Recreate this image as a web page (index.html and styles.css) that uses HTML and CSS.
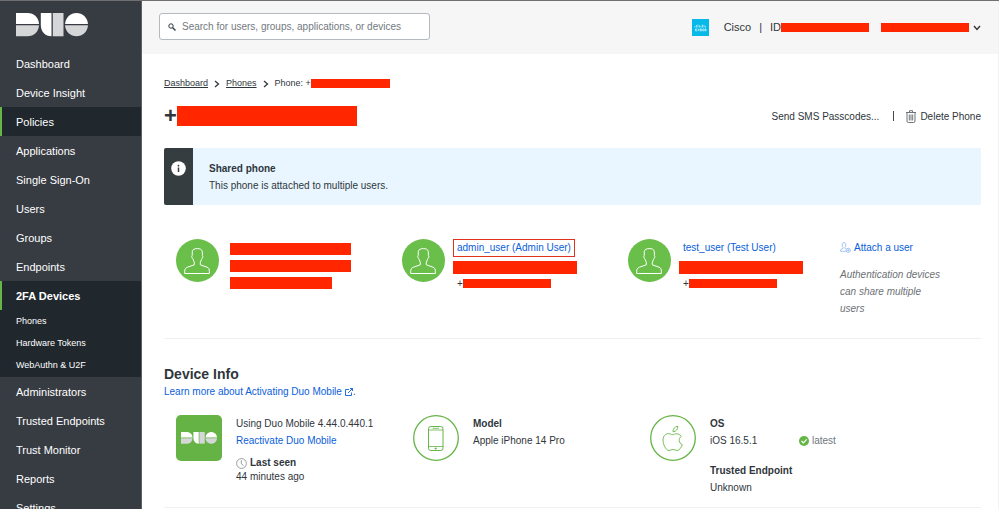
FILE: index.html
```html
<!DOCTYPE html>
<html lang="en">
<head>
<meta charset="utf-8">
<title>Duo Admin - Phone</title>
<link rel="stylesheet" href="styles.css">
</head>
<body>
<svg width="0" height="0" class="defs" aria-hidden="true">
  <symbol id="duo" viewBox="0 0 72 24">
    <path fill="#fff" d="M0 0H11.500C18 0 22.700 4.500 23 11H0Z"/>
    <path class="duo-shade" d="M0 12.300H23C22.500 19 18 23.300 11.500 23.300H0Z"/>
    <path fill="#fff" d="M24.800 0H35.500V23.300C29 23.300 24.800 18.500 24.800 12Z"/>
    <path class="duo-shade" d="M36.800 0H47.500V23.300H36.800Z"/>
    <path fill="#fff" d="M49 11C49.500 4.500 54.500 0 60.500 0S71.500 4.500 72 11Z"/>
    <path class="duo-shade" d="M49 12.300H72C71.500 19 66.500 23.300 60.500 23.300S49.500 19 49 12.300Z"/>
  </symbol>
  <symbol id="person" viewBox="0 0 43 43">
    <path fill="none" stroke="#fff" stroke-width="1" stroke-linejoin="round" d="M8.700 34.500V32.500C8.700 30 9.500 29 11.500 28.200L18.300 25.800V23.300L17.200 20.700L16.600 19.500C15.600 18.500 15.600 17.500 16.200 16.500L16.300 12.500C16.800 10.300 18.500 9.600 21.300 9.600S25.800 10.300 26.300 12.500L26.400 16.500C27 17.500 27 18.500 26 19.500L25.400 20.700L24.300 23.300V25.800L31 28.200C33 29 33.300 30 33.300 32.500V34.500Z"/>
  </symbol>
</svg>
<div class="app">
  <aside class="sidebar">
    <a class="brand" href="#" aria-label="Duo"><svg class="logo"><use href="#duo"/></svg></a>
    <nav>
      <a class="item" href="#">Dashboard</a>
      <a class="item" href="#">Device Insight</a>
      <a class="item active" href="#">Policies</a>
      <a class="item" href="#">Applications</a>
      <a class="item" href="#">Single Sign-On</a>
      <a class="item" href="#">Users</a>
      <a class="item" href="#">Groups</a>
      <a class="item" href="#">Endpoints</a>
      <div class="group">
        <a class="item active current" href="#">2FA Devices</a>
        <a class="sub" href="#">Phones</a>
        <a class="sub" href="#">Hardware Tokens</a>
        <a class="sub" href="#">WebAuthn &amp; U2F</a>
      </div>
      <a class="item" href="#">Administrators</a>
      <a class="item" href="#">Trusted Endpoints</a>
      <a class="item" href="#">Trust Monitor</a>
      <a class="item" href="#">Reports</a>
      <a class="item" href="#">Settings</a>
    </nav>
  </aside>
  <div class="page">
    <header class="topbar">
      <label class="search">
        <svg width="8" height="8" viewBox="0 0 8 8"><circle cx="3" cy="3" r="2.200" fill="none" stroke="#32373c" stroke-width="1"/><path d="M4.700 4.700L7.500 7.500" stroke="#32373c" stroke-width="1.300"/></svg>
        <input type="text" aria-label="Search" placeholder="Search for users, groups, applications, or devices">
      </label>
      <div class="account">
        <svg class="cisco" width="17" height="17" viewBox="0 0 17 17"><rect width="17" height="17" fill="#06b9e8"/><path stroke="#b5edfb" stroke-width=".8" d="M3 7v1.500M4.500 6v2.500M6 5.500v3M7.500 6.500v2M9 6.500v2M10.500 5.500v3M12 6v2.500M13.500 7v1.500"/><path fill="none" stroke="#d5f5fd" stroke-width=".8" d="M5.500 10H3.500V11.800H5.500M6.700 9.800V12M9.800 10H8V11H9.500V11.800H7.800M12 10H10.800V11.800H12M12.800 10H14V11.800H12.800Z"/></svg>
        <span>Cisco</span><span class="bar">|</span><span class="id">ID<i class="redact r88"></i></span>
        <button class="user-menu" aria-label="Account menu"><i class="redact r88"></i><svg width="8" height="6" viewBox="0 0 8 6"><path d="M1 1L4 4.500L7 1" fill="none" stroke="#32373c" stroke-width="1.400"/></svg></button>
      </div>
    </header>
    <main>
      <nav class="crumbs" aria-label="Breadcrumb">
        <a href="#">Dashboard</a>
        <svg width="6" height="8" viewBox="0 0 6 8"><path d="M1 1L4.500 4L1 7" fill="none" stroke="#32373c" stroke-width="1.300"/></svg>
        <a href="#">Phones</a>
        <svg width="6" height="8" viewBox="0 0 6 8"><path d="M1 1L4.500 4L1 7" fill="none" stroke="#32373c" stroke-width="1.300"/></svg>
        <span class="crumb-phone">Phone: +<i class="redact r79"></i></span>
      </nav>
      <div class="title">
        <h1>+<i class="redact"></i></h1>
        <div class="actions">
          <button>Send SMS Passcodes...</button>
          <i class="divider"></i>
          <button><svg width="10" height="13" viewBox="0 0 10 13"><path fill="none" stroke="#4a5056" stroke-width=".8" d="M0 2.500H10M3.500 2.300V.7H6.500V2.300M1 3V11Q1 12.500 2.500 12.500H7.500Q9 12.500 9 11V3M3.300 4.500V10.500M5 4.500V10.500M6.700 4.500V10.500"/></svg>Delete Phone</button>
        </div>
      </div>
      <section class="notice">
        <div class="notice-icon"><svg width="15" height="15" viewBox="0 0 15 15"><circle cx="7.500" cy="7.500" r="7.300" fill="#fff"/><circle cx="7.500" cy="4.700" r=".9" fill="#353d41"/><path d="M7.500 6.500V11" stroke="#353d41" stroke-width="1.500"/></svg></div>
        <div class="notice-text"><strong>Shared phone</strong><span>This phone is attached to multiple users.</span></div>
      </section>
      <section class="users">
        <article class="user">
          <svg class="avatar"><use href="#person"/></svg>
          <div class="hidden-user"><i class="redact"></i><i class="redact"></i><i class="redact"></i></div>
        </article>
        <article class="user">
          <svg class="avatar"><use href="#person"/></svg>
          <div class="details"><a class="name marked" href="#">admin_user (Admin User)</a><i class="redact mail"></i><span class="phone">+<i class="redact r88"></i></span></div>
        </article>
        <article class="user">
          <svg class="avatar"><use href="#person"/></svg>
          <div class="details"><a class="name" href="#">test_user (Test User)</a><i class="redact mail"></i><span class="phone">+<i class="redact r88"></i></span></div>
        </article>
        <div class="attach">
          <a href="#"><svg width="11" height="11" viewBox="0 0 11 11"><g fill="none" stroke="#8db5f0" stroke-width=".8"><path d="M6 9.300H.5V8.200Q.5 7.500 1.300 7.200L3 6.500V5.500Q2 4.700 2.200 3L2.400 1.500Q2.800.5 4 .5T5.700 1.500L5.800 3Q5.900 4.700 5 5.500V6.500L6 7"/><circle cx="8.300" cy="8.300" r="2.100"/><path d="M8.300 7.200V9.400M7.200 8.300H9.400"/></g></svg>Attach a user</a>
          <p>Authentication devices can share multiple users</p>
        </div>
      </section>
      <section class="info">
        <h2>Device Info</h2>
        <a class="learn" href="#">Learn more about Activating Duo Mobile <svg width="8" height="8" viewBox="0 0 8 8"><path fill="none" stroke="#0a60db" stroke-width=".9" d="M4 1.500H.5V7.500H6.500V4.500M3 5L7.500.5M5 .5H7.500V3"/></svg>.</a>
        <div class="device">
          <div class="cell">
            <div class="tile"><svg class="tile-logo"><use href="#duo"/></svg></div>
            <div class="facts">
              <span>Using Duo Mobile 4.44.0.440.1</span>
              <a href="#">Reactivate Duo Mobile</a>
              <div class="seen"><strong><svg width="11" height="11" viewBox="0 0 11 11"><circle cx="5.500" cy="5.500" r="4.900" fill="none" stroke="#81878c" stroke-width=".8"/><path d="M5.300 2.300V5.700L7.500 7.500" fill="none" stroke="#81878c" stroke-width=".8"/></svg>Last seen</strong><span>44 minutes ago</span></div>
            </div>
          </div>
          <div class="cell">
            <svg class="ring" viewBox="0 0 46 46"><g fill="none" stroke="#65b547"><circle cx="23" cy="23" r="22.300" stroke-width="1.300"/><rect x="15.500" y="11.500" width="14.500" height="24" rx="2.200"/><path d="M15.500 15H30M15.500 31.500H30M19.500 13.300H26M22.700 32.300V34.700M21.500 33.500H24" stroke-width=".8"/></g></svg>
            <div class="facts"><strong>Model</strong><span>Apple iPhone 14 Pro</span></div>
          </div>
          <div class="cell">
            <svg class="ring" viewBox="0 0 46 46"><g fill="none" stroke="#65b547" stroke-linejoin="round"><circle cx="23" cy="23" r="22.300" stroke-width="1.300"/><path stroke-width=".9" d="M31.300 21.300C29.500 19 26.500 18 23.500 19.500C22.500 20 21.700 19.500 21 19.200C16.500 17.300 13 20.500 13 25C13 29 15.500 35.300 19 35.500C20.500 35.500 21.200 34.500 23 34.500S25.500 35.500 27 35.500C29.500 35.500 31.300 32.300 32.300 29.700C28.700 28.200 28 23.500 31.300 21.300ZM23 16.800C22.800 14 24.800 11.500 27.800 11.200C28 14.200 26 16.700 23 16.800Z"/></g></svg>
            <div class="facts os">
              <strong>OS</strong>
              <div class="version"><span>iOS 16.5.1</span><span class="latest"><svg width="10" height="10" viewBox="0 0 10 10"><circle cx="5" cy="5" r="5" fill="#65b547"/><path d="M2.500 5L4.400 6.900L7.700 3.400" fill="none" stroke="#fff" stroke-width="1.200"/></svg>latest</span></div>
              <strong class="trusted">Trusted Endpoint</strong>
              <span>Unknown</span>
            </div>
          </div>
        </div>
      </section>
    </main>
  </div>
</div>
</body>
</html>
```
FILE: styles.css
```css
* { box-sizing: border-box; }
html, body { height: 100%; }
body { margin: 0; overflow: hidden; background: #fff; color: #2f363c; font: 10px/17px "Liberation Sans", Arial, sans-serif; }
a { color: #0a60db; text-decoration: none; }
button { padding: 0; border: 0; background: none; color: inherit; font: inherit; }
svg { display: block; flex: none; }
.defs { position: absolute; }

.app { display: flex; height: 100vh; border-top: 1px solid #707073; overflow: hidden; }
.sidebar { flex: none; width: 142px; background: #373b42; border-right: 1px solid #5d6167; overflow: hidden; }
.brand { display: block; height: 48px; padding: 12px 16px; }
.logo { width: 72px; height: 24px; }
.duo-shade { fill: #d4d6d8; }
.item { display: flex; align-items: center; height: 29px; padding: 2px 0 0 16px; color: #fff; font-size: 11px; }
.active { background: #20272d; border-left: 2px solid #65b547; padding-left: 14px; }
.current { font-weight: bold; }
.group { background: #20272d; padding-bottom: 1px; }
.sub { display: flex; align-items: center; height: 22px; padding-left: 16px; color: #fff; font-size: 9px; }

.page { flex: 1; min-width: 0; border-right: 1px solid #f3f3f3; }
.topbar { display: flex; justify-content: space-between; align-items: center; height: 53px; padding: 0 17px 2px; background: #f6f6f6; }
.search { display: flex; align-items: center; gap: 6px; flex: 0 1 271px; height: 27px; padding: 0 8px; border: 1px solid #b4bac0; border-radius: 3px; background: #fff; }
.search input { flex: 1; min-width: 0; padding: 0; border: 0; outline: 0; background: none; color: #2f363c; font: inherit; }
.search input::placeholder { color: #727980; opacity: 1; }
.account { display: flex; align-items: center; padding-top: 2px; font-size: 11px; }
.cisco { margin-right: 15px; }
.bar { margin: 0 8px; }
.id, .user-menu, .crumb-phone, .phone { display: flex; align-items: center; }
.user-menu { gap: 4px; margin-left: 12px; }
.redact { display: block; flex: none; height: 9px; background: #ff2600; }
.r88 { width: 88px; }
.r79 { width: 79px; }

main { padding: 21px 17px 0 22px; }
.crumbs { display: flex; align-items: center; gap: 6px; font-size: 9px; }
.crumbs a { color: inherit; text-decoration: underline; text-underline-offset: 1px; }
.title { display: flex; align-items: center; justify-content: space-between; height: 20px; margin-top: 14px; }
h1 { display: flex; align-items: center; margin: 0; font-size: 22px; line-height: 20px; }
h1 .redact { width: 180px; height: 20px; }
.actions { display: flex; align-items: center; }
.actions button { display: flex; align-items: center; gap: 4px; }
.divider { width: 1px; height: 10px; margin: 0 12px 0 14px; background: #444a50; }
.notice { display: flex; margin-top: 22px; border-radius: 2px; background: #e9f6ff; overflow: hidden; }
.notice-icon { width: 29px; padding: 13px 7px; background: #353d41; }
.notice-text { display: flex; flex-direction: column; padding: 12px 16px 11px; }

.users { display: grid; grid-template-columns: 226fr 226fr 212fr 141fr; margin-top: 34px; padding-left: 12px; }
.user { display: flex; min-width: 0; }
.avatar { width: 43px; height: 43px; border-radius: 50%; background: #6abf4b; }
.details { display: flex; flex-direction: column; align-items: flex-start; padding-left: 8px; }
.name { padding: 0 3px; border: 1px solid transparent; line-height: 16px; }
.marked { border-color: #e2321e; }
.mail { width: 124px; height: 13px; margin: 4px 0 5px; }
.phone { height: 9px; padding-left: 4px; line-height: 9px; }
.hidden-user { display: flex; flex-direction: column; gap: 5px; padding: 4px 0 0 11px; }
.hidden-user .redact { width: 121px; height: 12px; }
.hidden-user .redact:last-child { width: 102px; }
.attach a { display: flex; align-items: center; gap: 3px; }
.attach p { max-width: 105px; margin: 10px 0 0; color: #6d7175; font-style: italic; }

.info { margin-top: 21px; padding-top: 26px; border-top: 1px solid #f0f0f0; border-bottom: 1px solid #f0f0f0; }
h2 { margin: 0; font-size: 14px; line-height: 18px; }
.learn { display: flex; align-items: center; gap: 3px; }
.learn svg { margin-right: -3px; }
.device { display: grid; grid-template-columns: 237fr 237fr 331fr; margin-top: 15px; padding: 0 0 11px 12px; }
.cell { display: flex; gap: 14px; min-width: 0; }
.tile { display: flex; flex: none; align-items: center; justify-content: center; width: 46px; height: 46px; border-radius: 5px; background: #65b245; }
.tile-logo { width: 36px; height: 12px; }
.ring { width: 46px; height: 46px; }
.facts { display: flex; flex-direction: column; }
.seen { display: flex; flex-direction: column; margin-top: 7px; line-height: 14px; }
.seen strong, .latest { display: flex; align-items: center; gap: 3px; }
.os { flex: 1; }
.version { display: grid; grid-template-columns: 89px 1fr; }
.latest { color: #6f777e; }
.trusted { margin-top: 13px; }
```
